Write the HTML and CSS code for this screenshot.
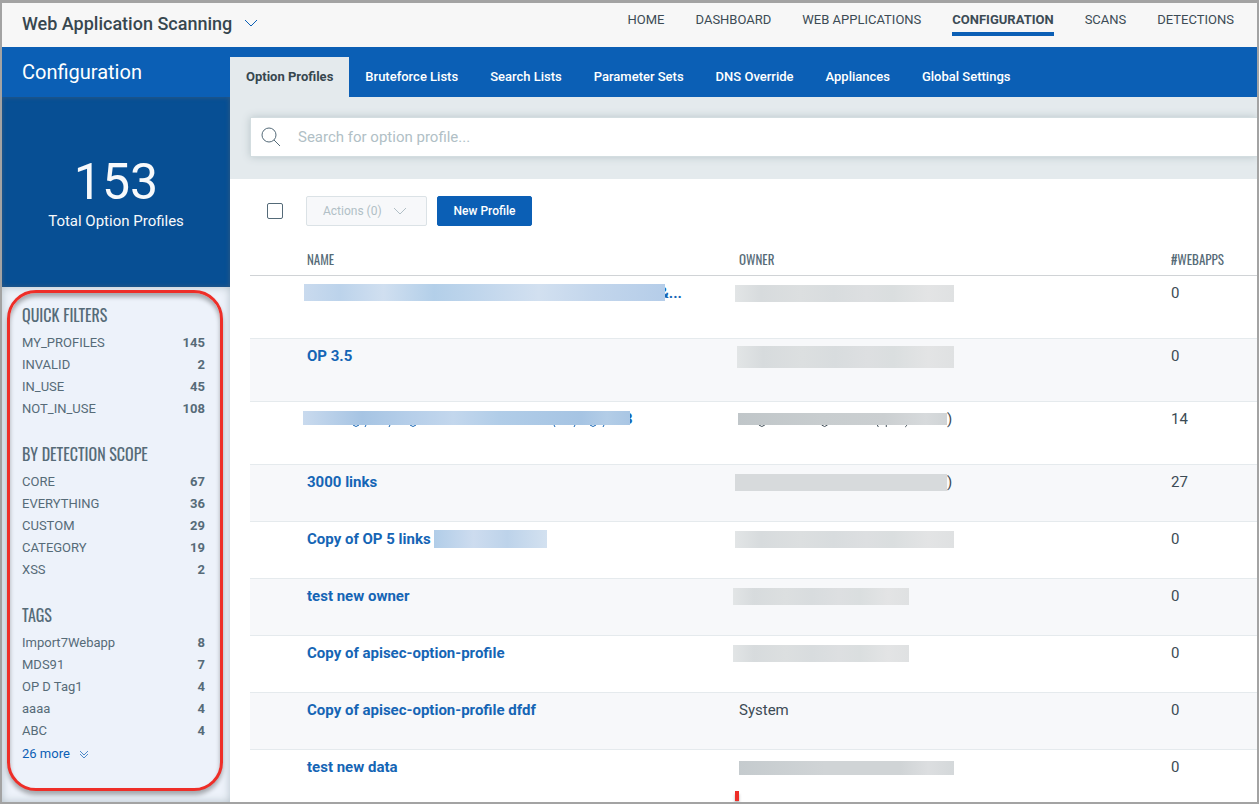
FILE: index.html
```html
<!DOCTYPE html>
<html lang="en">
<head>
<meta charset="utf-8">
<title>Web Application Scanning</title>
<link rel="stylesheet" href="styles.css">
</head>
<body>
<header class="topbar">
  <button class="app-switch" type="button">Web Application Scanning
    <svg class="app-chevron" viewBox="0 0 14 8" aria-hidden="true"><path d="M1 1l6 6 6-6"/></svg>
  </button>
  <nav class="main-nav">
    <a href="#">HOME</a>
    <a href="#">DASHBOARD</a>
    <a href="#">WEB APPLICATIONS</a>
    <a href="#" class="active">CONFIGURATION</a>
    <a href="#">SCANS</a>
    <a href="#">DETECTIONS</a>
  </nav>
</header>
<div class="layout">
  <aside class="sidebar">
    <h1 class="module-title">Configuration</h1>
    <div class="total">
      <div class="total-number">153</div>
      <div class="total-label">Total Option Profiles</div>
    </div>
    <div class="filters-panel">
      <div class="filters">
        <section class="group">
          <h2>QUICK FILTERS</h2>
          <ul>
            <li><span>MY_PROFILES</span><b>145</b></li>
            <li><span>INVALID</span><b>2</b></li>
            <li><span>IN_USE</span><b>45</b></li>
            <li><span>NOT_IN_USE</span><b>108</b></li>
          </ul>
        </section>
        <section class="group">
          <h2>BY DETECTION SCOPE</h2>
          <ul>
            <li><span>CORE</span><b>67</b></li>
            <li><span>EVERYTHING</span><b>36</b></li>
            <li><span>CUSTOM</span><b>29</b></li>
            <li><span>CATEGORY</span><b>19</b></li>
            <li><span>XSS</span><b>2</b></li>
          </ul>
        </section>
        <section class="group">
          <h2>TAGS</h2>
          <ul>
            <li><span>Import7Webapp</span><b>8</b></li>
            <li><span>MDS91</span><b>7</b></li>
            <li><span>OP D Tag1</span><b>4</b></li>
            <li><span>aaaa</span><b>4</b></li>
            <li><span>ABC</span><b>4</b></li>
          </ul>
          <a href="#" class="more">26 more
            <svg viewBox="0 0 10 9" aria-hidden="true"><path d="M1 1l4 4 4-4M1 4l4 4 4-4"/></svg>
          </a>
        </section>
      </div>
    </div>
  </aside>
  <main class="content">
    <nav class="tabs">
      <a href="#" class="active">Option Profiles</a>
      <a href="#">Bruteforce Lists</a>
      <a href="#">Search Lists</a>
      <a href="#">Parameter Sets</a>
      <a href="#">DNS Override</a>
      <a href="#">Appliances</a>
      <a href="#">Global Settings</a>
    </nav>
    <div class="search-area">
      <label class="search">
        <svg viewBox="0 0 20 20" aria-hidden="true"><circle cx="8" cy="8" r="7"/><path d="M13 13l6 6"/></svg>
        <input type="text" placeholder="Search for option profile..." aria-label="Search for option profile">
      </label>
    </div>
    <div class="toolbar">
      <input type="checkbox" class="select-all" aria-label="Select all">
      <button type="button" class="btn actions" disabled>Actions (0)
        <svg viewBox="0 0 14 8" aria-hidden="true"><path d="M1 1l6 6 6-6"/></svg>
      </button>
      <button type="button" class="btn primary">New Profile</button>
    </div>
    <table class="profiles">
      <thead>
        <tr><th class="pick"></th><th class="name">NAME</th><th class="owner">OWNER</th><th>#WEBAPPS</th></tr>
      </thead>
      <tbody>
        <tr class="tall"><td></td><td><a href="#"><span class="mask blue m-first"></span>&amp;...</a></td><td><span class="mask gray g-wide"></span></td><td>0</td></tr>
        <tr class="tall"><td></td><td><a href="#">OP 3.5</a></td><td><span class="mask gray g-high"></span></td><td>0</td></tr>
        <tr class="tall"><td></td><td><a href="#"><span class="mask blue m-third"><svg class="tails" viewBox="0 0 327 3" aria-hidden="true"><path d="M50 0q3 3 6 0M63 0l-1 2M87 0l-1 2M107 0q3 3 6 0M251 0l1 2M272 0l-1 2M287 0q3 3 6 0M301 0l-1 2"/></svg></span>3</a></td><td><span class="mask gray g-thin"><svg class="tails dark" viewBox="0 0 210 3" aria-hidden="true"><path d="M21 0q3 3 6 0M84 0q3 3 6 0M140 0l1 2M149 0v2M170 0l-2 2"/></svg></span>)</td><td>14</td></tr>
        <tr><td></td><td><a href="#">3000 links</a></td><td><span class="mask gray g-paren"></span>)</td><td>27</td></tr>
        <tr><td></td><td><a href="#">Copy of OP 5 links <span class="mask blue m-tail"></span></a></td><td><span class="mask gray g-wide"></span></td><td>0</td></tr>
        <tr><td></td><td><a href="#">test new owner</a></td><td><span class="mask gray g-short"></span></td><td>0</td></tr>
        <tr><td></td><td><a href="#">Copy of apisec-option-profile</a></td><td><span class="mask gray g-short"></span></td><td>0</td></tr>
        <tr><td></td><td><a href="#">Copy of apisec-option-profile dfdf</a></td><td>System</td><td>0</td></tr>
        <tr><td></td><td><a href="#">test new data</a></td><td><span class="mask gray g-last"></span></td><td>0</td></tr>
      </tbody>
    </table>
    <span class="marker"></span>
  </main>
</div>
</body>
</html>
```

FILE: styles.css
```css
* { box-sizing: border-box; }
body {
  margin: 0;
  height: 100vh;
  overflow: hidden;
  display: flex;
  flex-direction: column;
  border: 2px solid #a3a3a3;
  border-top-width: 3px;
  background: #fff;
  color: #3c4b55;
  font-family: Roboto, "Liberation Sans", sans-serif;
  font-size: 15px;
}
a { color: inherit; text-decoration: none; }
button { font-family: inherit; cursor: pointer; }
svg { fill: none; stroke: currentColor; }
h1, h2, ul { margin: 0; padding: 0; font-weight: 400; list-style: none; }

.topbar {
  flex: none;
  height: 44px;
  display: flex;
  justify-content: space-between;
  background: #f7f7f7;
}
.app-switch {
  display: flex;
  align-items: center;
  gap: 12px;
  padding: 0 0 4px 20px;
  border: 0;
  background: none;
  color: #37474f;
  font-size: 18px;
  font-weight: 500;
}
.app-chevron { width: 14px; height: 8px; color: #0b5fb5; }
.main-nav {
  display: flex;
  gap: 31px;
  padding: 7px 23px 0 0;
  font-size: 13px;
  line-height: 20px;
}
.main-nav a { height: 26px; }
.main-nav .active { font-weight: 700; border-bottom: 4px solid #0b5fb5; }

.layout { flex: 1; min-height: 0; display: flex; }
.sidebar {
  flex: none;
  width: 228px;
  display: flex;
  flex-direction: column;
  color: #566b78;
}
.module-title {
  flex: none;
  height: 50px;
  padding-left: 20px;
  background: #0b5fb5;
  color: #fff;
  font-size: 20px;
  line-height: 50px;
}
.total {
  flex: none;
  height: 190px;
  padding-top: 56px;
  background: #074f94;
  box-shadow: inset 0 0 5px #33597f;
  color: #f7f9fb;
  text-align: center;
}
.total-number { font-size: 50px; line-height: 58px; }
.total-label { font-size: 15px; line-height: 20px; }
.filters-panel {
  flex: 1;
  padding: 3px 7px 11px 5px;
  background: #edf2fa;
  box-shadow: inset 0 0 8px #b4c0c8;
}
.filters {
  display: flex;
  flex-direction: column;
  gap: 22px;
  padding: 10px 15px 22px 12px;
  border: 3px solid #ee2e28;
  border-radius: 29px;
  background: #edf2fa;
  box-shadow: 0 4px 4px rgba(0, 0, 0, .3), inset 0 4px 4px rgba(0, 0, 0, .3);
}
.group h2 {
  margin-bottom: 5px;
  font-family: Oswald, "Roboto Condensed", "Liberation Sans Narrow", "Liberation Sans", sans-serif;
  font-size: 16px;
  line-height: 24px;
}
.group li {
  display: flex;
  justify-content: space-between;
  font-size: 13px;
  line-height: 22px;
}
.more { display: flex; align-items: center; gap: 9px; color: #0b5fb5; font-size: 13px; line-height: 24px; }
.more svg { width: 10px; height: 9px; opacity: .7; }

.content { flex: 1; min-width: 0; position: relative; }
.tabs {
  height: 50px;
  display: flex;
  padding-top: 10px;
  background: #0b5fb5;
  color: #fff;
  font-size: 13px;
  font-weight: 500;
  line-height: 40px;
}
.tabs a { padding: 0 16px; }
.tabs .active { background: #e4eaed; color: #37474f; font-weight: 700; }
.search-area { padding: 20px 0 22px 20px; background: #e4eaed; }
.search {
  height: 40px;
  display: flex;
  align-items: center;
  gap: 17px;
  padding-left: 10px;
  border: 1px solid #d3dde0;
  border-right: 0;
  background: #fff;
  box-shadow: 0 0 8px #b9c6ca;
}
.search svg { width: 20px; height: 20px; color: #546a78; }
.search input {
  flex: 1;
  padding: 0;
  border: 0;
  outline: 0;
  font: inherit;
}
.search input::placeholder { color: #b1bfc6; opacity: 1; }
.toolbar { display: flex; align-items: center; padding: 17px 0 15px 37px; }
.select-all {
  appearance: none;
  width: 16px;
  height: 16px;
  margin: 0 23px 0 0;
  border: 1px solid #546a78;
  border-radius: 2px;
}
.btn {
  height: 30px;
  padding: 0 16px;
  border: 1px solid #dbe2e6;
  border-radius: 2px;
  font-size: 12px;
}
.actions {
  display: flex;
  align-items: center;
  gap: 11px;
  width: 121px;
  margin-right: 10px;
  background: #f7f8fa;
  color: #b1bfc6;
}
.actions svg { width: 14px; height: 8px; }
.primary { width: 95px; padding: 0; border-color: #0b5fb5; background: #0b5fb5; color: #fff; font-weight: 500; }

.profiles {
  width: calc(100% - 20px);
  margin-left: 20px;
  border-collapse: collapse;
  table-layout: fixed;
}
.profiles th {
  height: 34px;
  padding: 2px 0 0;
  border-bottom: 1px solid #d0d3d6;
  color: #566b78;
  font-family: Oswald, "Roboto Condensed", "Liberation Sans Narrow", "Liberation Sans", sans-serif;
  font-size: 13px;
  font-weight: 400;
  text-align: left;
}
.profiles .pick { width: 57px; }
.profiles .name, .profiles .owner { width: 42.9%; }
.profiles td {
  height: 57px;
  padding: 7px 0 0;
  border-bottom: 1px solid #e5eaed;
  line-height: 20px;
  vertical-align: top;
  white-space: nowrap;
}
.profiles .tall td { height: 63px; }
.profiles tbody tr:nth-child(even) { background: #f7f8fa; }
.profiles td a { color: #1565b5; font-weight: 700; }
.mask { display: inline-block; position: relative; height: 17px; margin: 2px 0 0 -4px; vertical-align: top; }
.blue { background: linear-gradient(90deg, #c9daee, #bcd3eb 10%, #d0dff0 22%, #b3cfe9 36%, #c4d8ed 52%, #d2e0f0 65%, #c3d6ec 80%, #b5cde9); }
.gray { background: linear-gradient(90deg, #e2e5e6, #d7dbdd 12%, #dcdfe0 30%, #d8dcde 45%, #dddfe1 60%, #dadedf 72%, #e3e4e5 88%, #dfe1e2); }
.m-first { width: 361px; margin: 1px -6px 0 -3px; }
.m-third { width: 327px; height: 14px; margin-right: -6px; background: linear-gradient(90deg, #c9daee, #a6c4e3 18%, #b5cee9 32%, #c3d7ed 46%, #b1cde8 60%, #a6c4e3 85%, #b3cde7 93%, #a9c6e4); }
.m-tail { width: 113px; height: 18px; margin: 1px 0 0; background: linear-gradient(90deg, #b1cde8, #cddcef 35%, #bdd3ea 65%, #d3e1f0); }
.g-wide { width: 219px; }
.g-high { width: 217px; height: 22px; margin: 0 0 0 -2px; }
.g-thin { width: 209px; height: 12px; margin: 4px 0 0 -1px; background: linear-gradient(90deg, #c0c6c9, #c8cdcf 40%, #cbcfd1 70%, #d7dadc 90%, #d0d4d6); }
.g-paren { width: 212px; background: #d7dadc; }
.g-short { width: 176px; margin-left: -6px; }
.g-last { width: 215px; height: 14px; margin: 4px 0 0; background: linear-gradient(90deg, #c5cbce, #d0d4d6 40%, #d0d4d6 75%, #dcdee0 88%, #d4d8da); }
.tails { position: absolute; top: 100%; left: 0; width: 100%; height: 3px; color: #1565b5; }
.tails.dark { color: #3c4b55; }
.marker {
  position: absolute;
  bottom: 1px;
  left: 505px;
  width: 4px;
  height: 10px;
  background: #ee2e28;
  box-shadow: 0 3px 3px rgba(0, 0, 0, .3);
}
```
